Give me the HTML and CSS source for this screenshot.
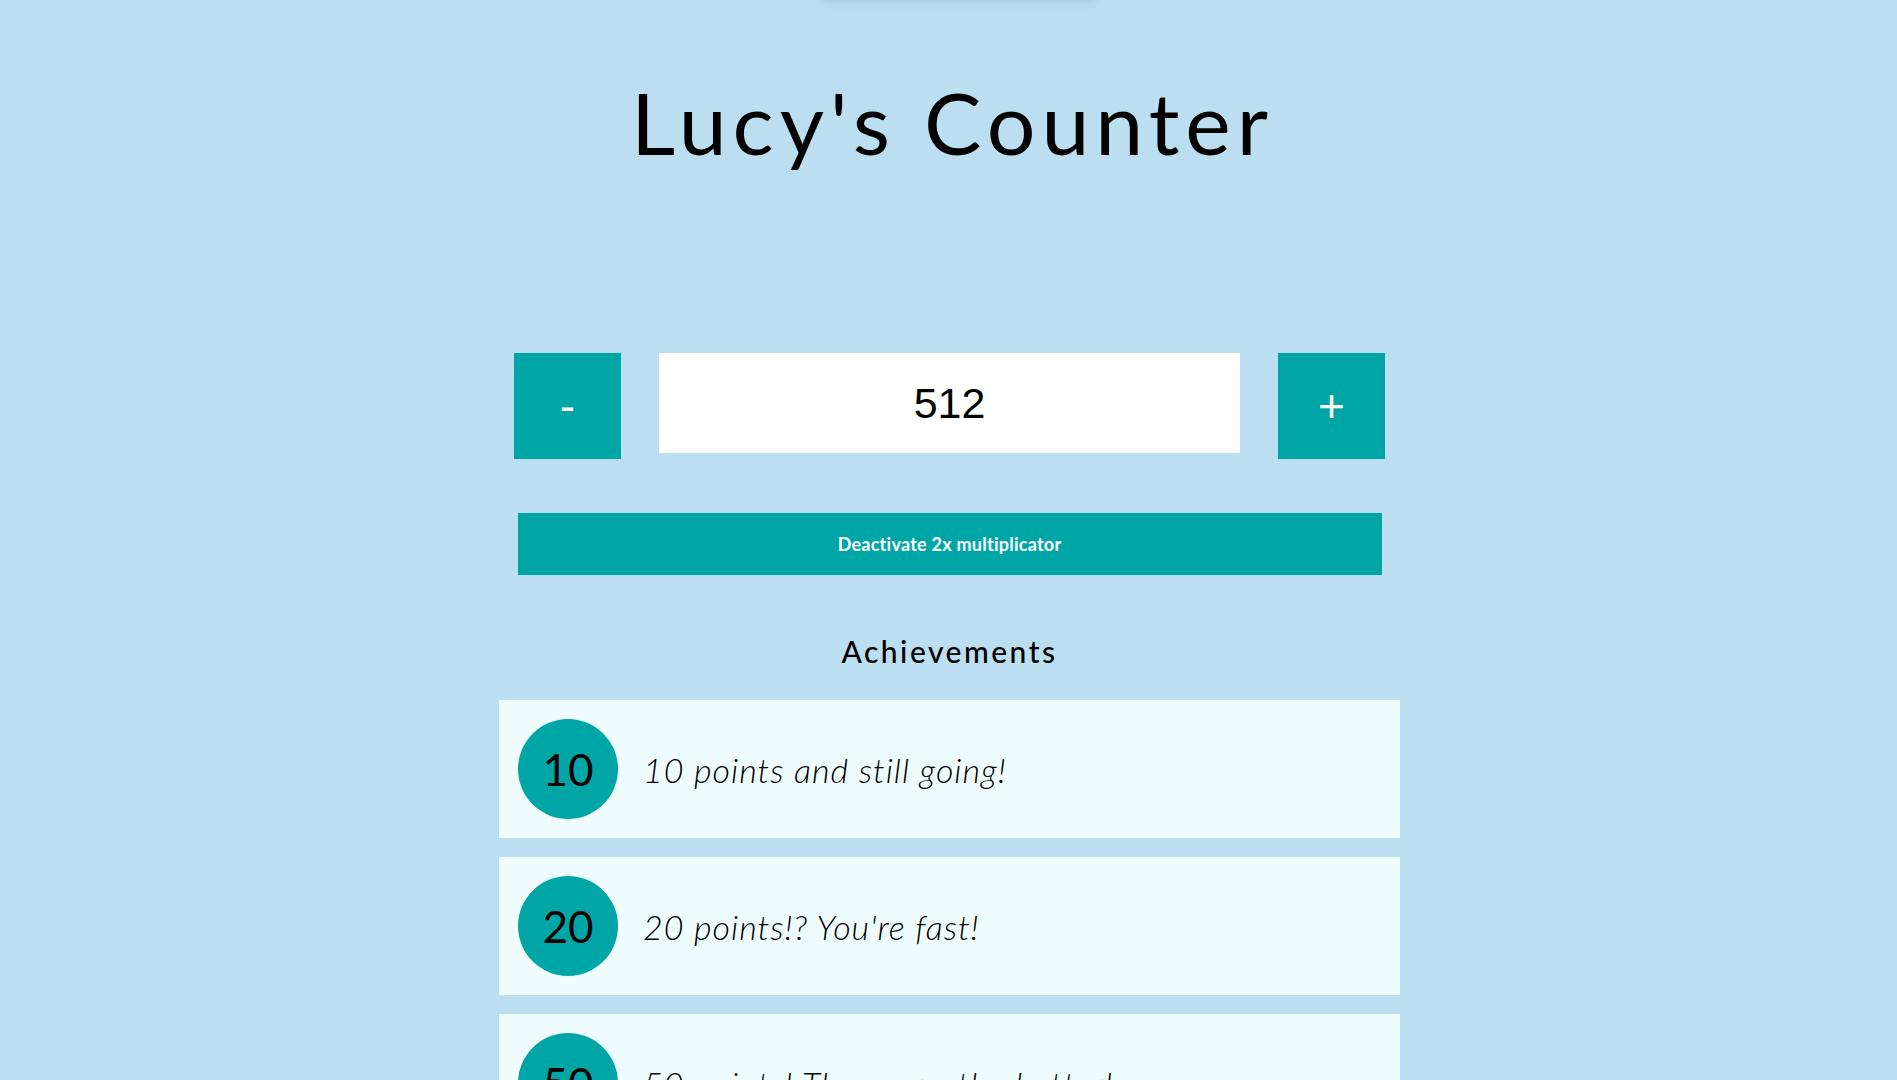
FILE: index.html
```html
<!DOCTYPE html>
<html lang="en">
<head>
<meta charset="utf-8">
<title>Lucy's Counter</title>
<link rel="stylesheet" href="styles.css">
</head>
<body>
<div class="top-shadow"></div>
<main class="app">
  <h1 class="title">Lucy's Counter</h1>
  <div class="counter-row">
    <button class="step-btn">-</button>
    <div class="count">512</div>
    <button class="step-btn">+</button>
  </div>
  <button class="multi-btn">Deactivate 2x multiplicator</button>
  <h2 class="ach-title">Achievements</h2>
  <section class="ach-list">
    <div class="ach-card">
      <div class="ach-badge">10</div>
      <p class="ach-text">10 points and still going!</p>
    </div>
    <div class="ach-card">
      <div class="ach-badge">20</div>
      <p class="ach-text">20 points!? You're fast!</p>
    </div>
    <div class="ach-card">
      <div class="ach-badge">50</div>
      <p class="ach-text">50 points! The more, the better!</p>
    </div>
  </section>
</main>
</body>
</html>
```

FILE: styles.css
```css
html, body {
  margin: 0;
  padding: 0;
}
body {
  background: #bbdef0;
  font-family: "Lato", "Noto Sans", sans-serif;
  color: #000;
  height: 1080px;
  overflow: hidden;
  position: relative;
}
.top-shadow {
  position: absolute;
  top: -30px;
  left: 823px;
  width: 272px;
  height: 30px;
  box-shadow: 0 0 10px rgba(60, 100, 130, 0.25);
}
.app {
  display: flex;
  flex-direction: column;
  align-items: center;
  padding-left: 2px;
}
.title {
  margin: 72px 0 0;
  padding-left: 6px;
  font-size: 86px;
  font-weight: 400;
  line-height: 100px;
  letter-spacing: 6px;
}
.counter-row {
  margin-top: 181px;
  display: flex;
  align-items: flex-start;
  gap: 38px;
}
.step-btn {
  width: 107px;
  height: 106px;
  border: 0;
  padding: 0;
  background: #00a6a6;
  color: #fff;
  font-family: "Liberation Sans", Arial, sans-serif;
  font-size: 46px;
  line-height: 1;
}
.count {
  width: 581px;
  height: 100px;
  background: #fff;
  display: flex;
  align-items: center;
  justify-content: center;
  font-family: "Liberation Sans", Arial, sans-serif;
  font-size: 43px;
}
.multi-btn {
  margin-top: 54px;
  width: 864px;
  height: 62px;
  border: 0;
  background: #00a6a6;
  color: #fff;
  font-family: "Lato", sans-serif;
  font-weight: 700;
  font-size: 18px;
  letter-spacing: 0.25px;
}
.ach-title {
  margin: 56px 0 0;
  font-size: 30px;
  font-weight: 500;
  line-height: 40px;
  letter-spacing: 2.5px;
}
.ach-list {
  margin-top: 29px;
  display: flex;
  flex-direction: column;
  gap: 19px;
}
.ach-card {
  width: 901px;
  box-sizing: border-box;
  padding: 19px;
  background: #f0fdff;
  display: flex;
  align-items: center;
}
.ach-badge {
  width: 100px;
  height: 100px;
  border-radius: 50%;
  background: #00a6a6;
  display: flex;
  align-items: center;
  justify-content: center;
  font-size: 44px;
  flex: none;
}
.ach-text {
  margin: 0 0 0 25px;
  font-size: 34px;
  font-style: italic;
  font-weight: 300;
  letter-spacing: 1px;
}
```
